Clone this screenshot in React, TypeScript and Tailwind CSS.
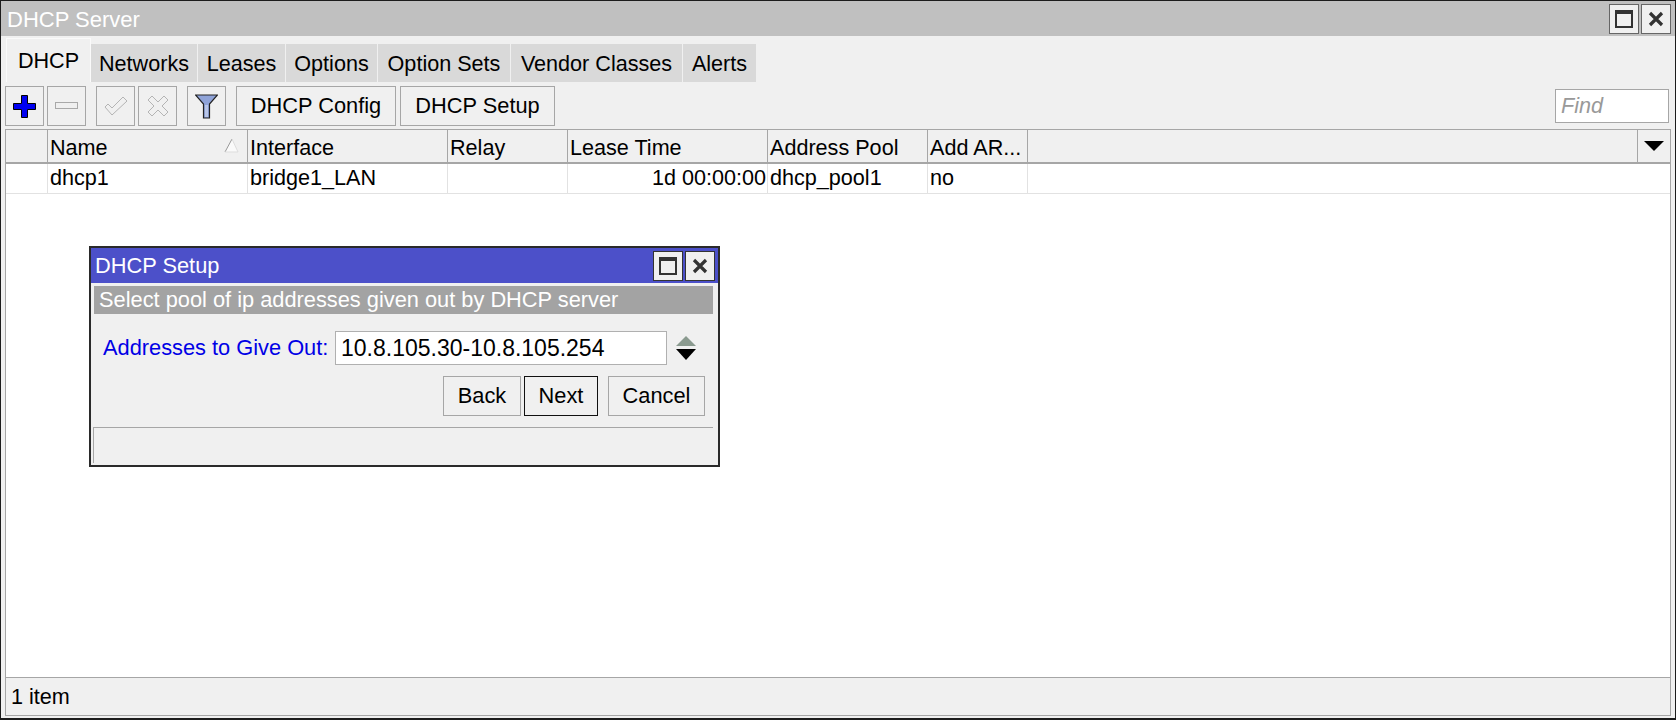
import type { ReactNode } from "react"

const tabs = [
  { label: "Networks", w: "w-[107px]" },
  { label: "Leases", w: "w-[88px]" },
  { label: "Options", w: "w-[92px]" },
  { label: "Option Sets", w: "w-[133px]" },
  { label: "Vendor Classes", w: "w-[172px]" },
  { label: "Alerts", w: "w-[74px]" },
]

const columns = [
  { label: "Name", w: "w-[200px]", value: "dhcp1" },
  { label: "Interface", w: "w-[200px]", value: "bridge1_LAN" },
  { label: "Relay", w: "w-[120px]", value: "" },
  { label: "Lease Time", w: "w-[200px]", value: "1d 00:00:00", right: true },
  { label: "Address Pool", w: "w-[160px]", value: "dhcp_pool1" },
  { label: "Add AR...", w: "w-[100px]", value: "no" },
]

function IconBox({ children, className }: { children: ReactNode; className: string }) {
  return (
    <div className={`flex h-[40px] w-[39px] shrink-0 items-center justify-center border border-[#a6a6a6] bg-[#f0f0f0] ${className}`}>
      {children}
    </div>
  )
}

function WindowButtons({ dark }: { dark?: boolean }) {
  const border = dark ? "border-[#333]" : "border-[#666]"
  return (
    <div className="flex gap-[2px]">
      <div className={`flex h-[30px] w-[30px] items-center justify-center border bg-[#f0f0f0] ${border}`}>
        <div className="h-[18px] w-[18px] border-2 border-t-[4px] border-[#333]" />
      </div>
      <div className={`flex h-[30px] w-[30px] items-center justify-center border bg-[#f0f0f0] ${border}`}>
        <svg width="16" height="16" viewBox="0 0 16 16">
          <path d="M2 2 L14 14 M14 2 L2 14" stroke="#333" strokeWidth="3.2" fill="none" />
        </svg>
      </div>
    </div>
  )
}

function ActionButton({ label, className }: { label: string; className: string }) {
  return (
    <div className={`flex h-[40px] shrink-0 items-center justify-center border bg-[#f0f0f0] text-[21.8px] ${className}`}>
      {label}
    </div>
  )
}

export default function App() {
  return (
    <div className="relative flex h-[720px] w-[1676px] flex-col border border-b-2 border-[#1c1c1c] bg-[#f0f0f0] pb-[2px] font-['Liberation_Sans',Arial,sans-serif] text-[21.6px] leading-none text-black">
      {/* title bar */}
      <div className="flex h-[35px] shrink-0 items-center justify-between bg-[#c0c0c0] pl-[6px] pr-[4px]">
        <span className="pt-[2px] text-[22px] text-white">DHCP Server</span>
        <WindowButtons />
      </div>

      {/* tabs */}
      <div className="mt-[2px] flex h-[44px] shrink-0 items-end pl-[5px]">
        <div className="flex h-[44px] w-[85px] items-center justify-center border-l border-r border-t border-[#fafafa] bg-[#f0f0f0] pt-[1px]">
          DHCP
        </div>
        {tabs.map((t) => (
          <div
            key={t.label}
            className={`flex h-[38px] items-center justify-center border-r border-[#f0f0f0] bg-[#d9d9d9] pt-[2px] ${t.w}`}
          >
            {t.label}
          </div>
        ))}
      </div>

      {/* toolbar */}
      <div className="mt-[4px] flex h-[40px] shrink-0 items-center pl-[4px] pr-[6px]">
        <IconBox className="mr-[3px]">
          <svg width="23" height="23" viewBox="0 0 23 23">
            <path d="M8.5 0.5 H14.5 V8.5 H22.5 V14.5 H14.5 V22.5 H8.5 V14.5 H0.5 V8.5 H8.5 Z" fill="#0000f0" stroke="#000" strokeWidth="1" />
          </svg>
        </IconBox>
        <IconBox className="mr-[10px]">
          <svg width="23" height="8" viewBox="0 0 23 8">
            <rect x="0.5" y="0.5" width="22" height="6" fill="#efefef" stroke="#a8a8a8" strokeWidth="1" />
          </svg>
        </IconBox>
        <IconBox className="mr-[3px]">
          <svg width="24" height="20" viewBox="0 0 24 20">
            <path d="M1 11 L4 8 L8 12 L19 1 L23 5 L8 19 Z" fill="#f0f0f0" stroke="#b4b4b4" strokeWidth="1" />
          </svg>
        </IconBox>
        <IconBox className="mr-[10px]">
          <svg width="22" height="22" viewBox="0 0 22 22">
            <path d="M1 5 L5 1 L11 7 L17 1 L21 5 L15 11 L21 17 L17 21 L11 15 L5 21 L1 17 L7 11 Z" fill="#f0f0f0" stroke="#b4b4b4" strokeWidth="1" />
          </svg>
        </IconBox>
        <IconBox className="mr-[10px]">
          <svg width="23" height="25" viewBox="0 0 23 25">
            <path d="M0.5 1 H22.5 L14.5 10 V24 H8.5 V10 Z" fill="#8fa3d8" stroke="#222" strokeWidth="1.2" />
            <path d="M10 11 H13 V23 H10 Z" fill="#b9c6e8" />
          </svg>
        </IconBox>
        <ActionButton label="DHCP Config" className="w-[160px] border-[#a6a6a6]" />
        <ActionButton label="DHCP Setup" className="ml-[4px] w-[155px] border-[#a6a6a6]" />
        <div className="ml-auto flex h-[34px] w-[114px] items-center border border-[#a6a6a6] bg-white pl-[5px] italic text-[#999]">
          Find
        </div>
      </div>

      {/* table */}
      <div className="mx-[4px] mt-[3px] flex min-h-0 flex-1 flex-col border-x border-t border-[#a6a6a6] bg-white">
        <div className="flex h-[34px] shrink-0 border-b-2 border-[#a6a6a6] bg-[#f0f0f0]">
          <div className="w-[42px] shrink-0 border-r border-[#a6a6a6]" />
          {columns.map((c) => (
            <div key={c.label} className={`relative flex shrink-0 items-center border-r border-[#a6a6a6] pl-[2px] pt-[3px] ${c.w}`}>
              {c.label}
              {c.label === "Name" && (
                <svg className="absolute right-[8px] top-[8px]" width="15" height="15" viewBox="0 0 15 15">
                  <path d="M8 1 L14 14 H1 Z" fill="#fafafa" />
                  <path d="M8 1 L1 14" stroke="#999" strokeWidth="1" fill="none" />
                  <path d="M8 1 L14 14 H1" stroke="#ddd" strokeWidth="1" fill="none" />
                </svg>
              )}
            </div>
          ))}
          <div className="flex-1 border-r border-[#a6a6a6]" />
          <div className="flex w-[32px] shrink-0 items-center justify-center">
            <svg width="20" height="10" viewBox="0 0 20 10">
              <path d="M0 0 H20 L10 10 Z" fill="#000" />
            </svg>
          </div>
        </div>
        <div className="flex h-[30px] shrink-0 border-b border-[#e2e2e2]">
          <div className="w-[42px] shrink-0 border-r border-[#e2e2e2]" />
          {columns.map((c) => (
            <div
              key={c.label}
              className={`flex shrink-0 items-center border-r border-[#e2e2e2] pb-[1px] ${c.w} ${c.right ? "justify-end pr-[1px]" : "pl-[2px]"}`}
            >
              {c.value}
            </div>
          ))}
        </div>
      </div>

      {/* status bar */}
      <div className="mx-[4px] flex h-[39px] shrink-0 items-center border border-[#a6a6a6] pl-[5px]">1 item</div>

      {/* floating dialog */}
      <div className="absolute left-[88px] top-[245px] flex h-[221px] w-[631px] flex-col border-2 border-[#2a2a2a] bg-[#f0f0f0] text-[21.8px]">
        <div className="flex h-[35px] shrink-0 items-center justify-between bg-[#4c50c9] pl-[4px] pr-[3px]">
          <span className="text-white">DHCP Setup</span>
          <WindowButtons dark />
        </div>
        <div className="ml-[3px] mr-[5px] mt-[3px] flex h-[28px] shrink-0 items-center bg-[#a3a3a3] pl-[5px] text-white">
          Select pool of ip addresses given out by DHCP server
        </div>
        <div className="mt-[17px] flex h-[34px] shrink-0 items-center pl-[12px]">
          <span className="w-[232px] shrink-0 text-[#0000e6]">Addresses to Give Out:</span>
          <div className="flex h-[34px] w-[332px] shrink-0 items-center border border-[#b0b0b0] bg-white pl-[5px] text-[23px]">
            10.8.105.30-10.8.105.254
          </div>
          <svg className="ml-[9px]" width="20" height="24" viewBox="0 0 20 24">
            <path d="M10 0 L20 10 H0 Z" fill="#8a9a8f" />
            <path d="M0 13 H20 L10 24 Z" fill="#000" />
          </svg>
        </div>
        <div className="mt-[11px] flex h-[40px] shrink-0 justify-end pr-[13px]">
          <ActionButton label="Back" className="w-[78px] border-[#a6a6a6]" />
          <ActionButton label="Next" className="ml-[3px] w-[74px] border-[#111]" />
          <ActionButton label="Cancel" className="ml-[10px] w-[97px] border-[#a6a6a6]" />
        </div>
        <div className="mb-[2px] ml-[2px] mr-[5px] mt-[11px] flex-1 border-l border-t border-[#a6a6a6]" />
      </div>
    </div>
  )
}
